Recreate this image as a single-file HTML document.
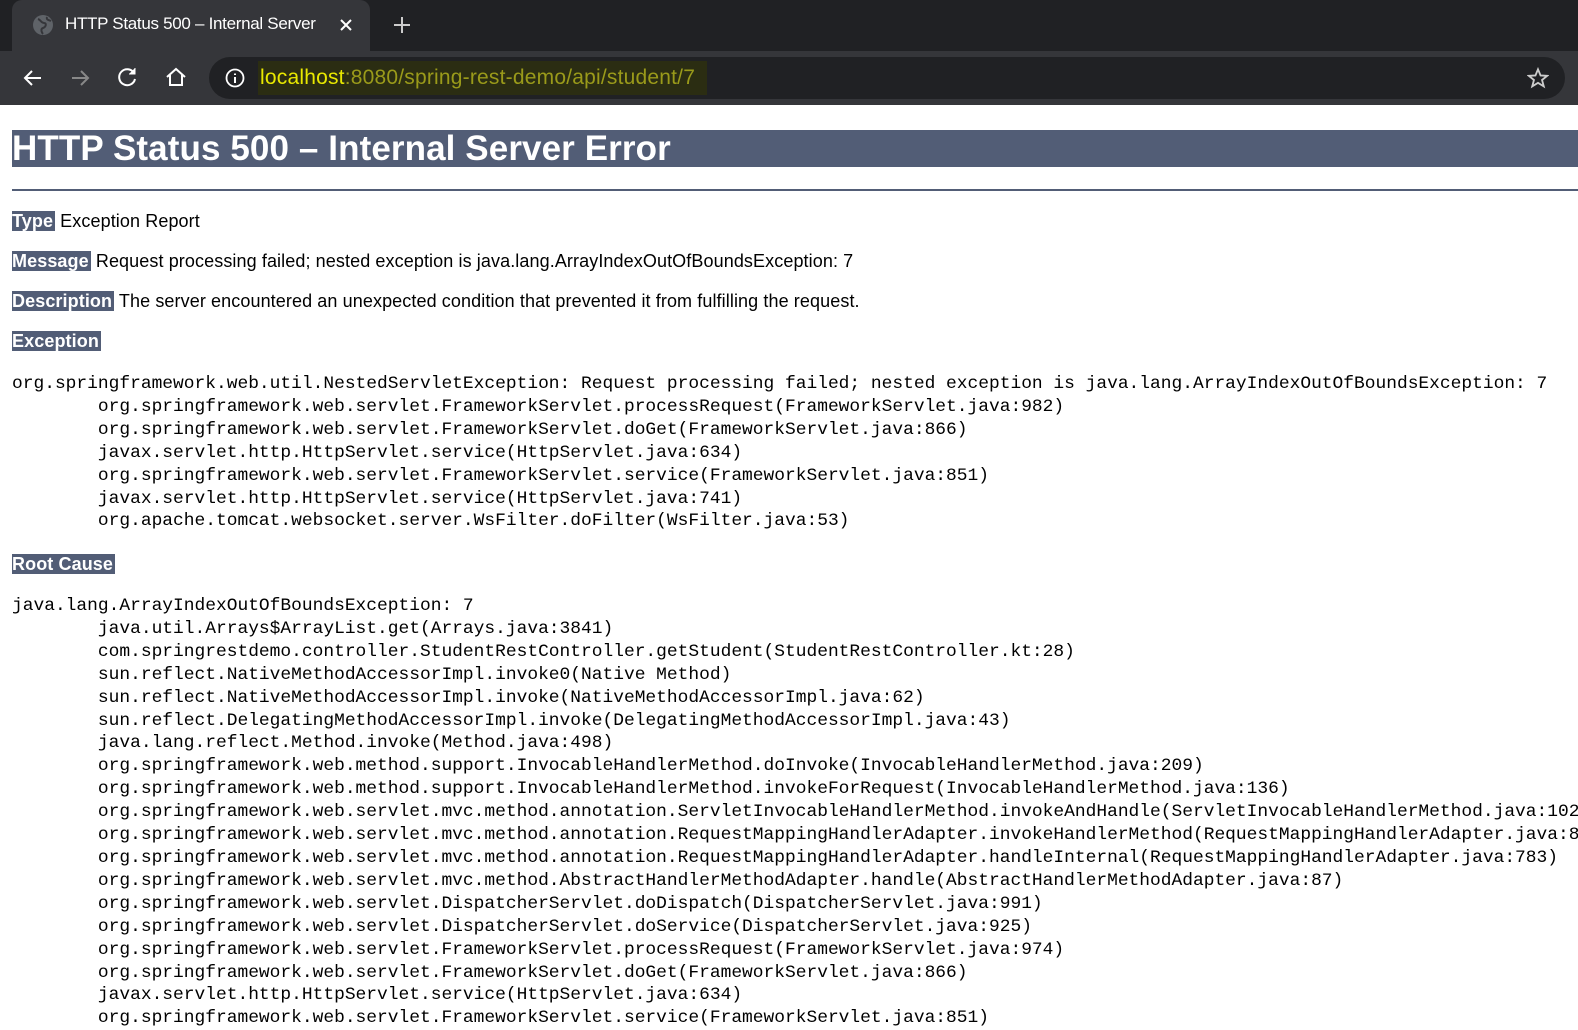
<!DOCTYPE html>
<html><head><meta charset="utf-8"><style>
body{margin:0;width:1578px;height:1018px;overflow:hidden;background:#fff;font-family:"Liberation Sans",sans-serif;}
.tabs{position:absolute;left:0;top:0;width:1578px;height:51px;background:#202124}
.tab{position:absolute;left:12px;top:0;width:358px;height:51px;background:#35363a;border-radius:10px 10px 0 0;color:#fff;font-size:17px}
.tab .t{position:absolute;left:53px;top:14px;letter-spacing:-0.3px;white-space:nowrap;width:260px;overflow:hidden}
.tool{position:absolute;left:0;top:51px;width:1578px;height:54px;background:#35363a}
.omni{position:absolute;left:209px;top:6px;width:1356px;height:42px;background:#202124;border-radius:21px}
.url{position:absolute;left:49px;top:4px;height:34px;padding:0 12px 0 2px;background:#2b2d12;font-size:21px;line-height:34px;color:#9a9a1a;letter-spacing:0.2px}
.url b{font-weight:normal;color:#e8e800}
.h1{position:absolute;left:12px;top:130px;width:1566px;height:37px;background:#525D76;color:#fff;font-weight:bold;font-size:35px;line-height:37px;letter-spacing:0.1px;white-space:nowrap;overflow:hidden}
.hr{position:absolute;left:12px;top:189px;width:1566px;height:2px;background:#525D76}
.row{position:absolute;left:12px;font-size:18px;color:#000;white-space:nowrap;letter-spacing:0.1px}
.row .l{background:#525D76;color:#fff;font-weight:bold;padding:0 2px 0 0}
pre{position:absolute;left:12px;margin:0;font-family:"Liberation Mono",monospace;font-size:17.9px;line-height:22.9px;color:#000}
</style></head><body>
<div class="tabs"><div class="tab">
<svg style="position:absolute;left:20px;top:14px" width="22" height="22" viewBox="0 0 22 22"><circle cx="11" cy="11" r="10" fill="#5f6368"/><path d="M6 5c3 1 3 4 6 4s2 4-1 5-1 5 0 6M15 3c-1 3 2 3 4 4" stroke="#35363a" stroke-width="2" fill="none"/></svg>
<div class="t">HTTP Status 500 – Internal Server</div>
<svg style="position:absolute;left:327px;top:18px" width="14" height="14"><path d="M2 2L12 12M12 2L2 12" stroke="#fff" stroke-width="2"/></svg>
</div>
<svg style="position:absolute;left:392px;top:15px" width="20" height="20"><path d="M10 2V18M2 10H18" stroke="#ccc" stroke-width="2"/></svg>
</div>
<div class="tool">
<svg style="position:absolute;left:22px;top:16px" width="22" height="22"><path d="M19 11H4M10 4L3 11L10 18" stroke="#fff" stroke-width="2" fill="none"/></svg>
<svg style="position:absolute;left:69px;top:16px" width="22" height="22"><path d="M3 11H18M12 4L19 11L12 18" stroke="#888" stroke-width="2" fill="none"/></svg>
<svg style="position:absolute;left:117px;top:15px" width="22" height="22"><path d="M17 7A8 8 0 1 0 18 13" stroke="#fff" stroke-width="2" fill="none"/><path d="M18 2V8H12" fill="#fff" stroke="#fff" stroke-width="1"/></svg>
<svg style="position:absolute;left:164px;top:14px" width="24" height="24"><path d="M3 12L12 4L21 12M6 10V20H18V10" stroke="#fff" stroke-width="2" fill="none"/></svg>
<div class="omni">
<svg style="position:absolute;left:16px;top:11px" width="20" height="20"><circle cx="10" cy="10" r="8.5" stroke="#fff" stroke-width="1.8" fill="none"/><path d="M10 9V15M10 5.5V7" stroke="#fff" stroke-width="2"/></svg>
<div class="url"><b>localhost</b>:8080/spring-rest-demo/api/student/7</div>
<svg style="position:absolute;left:1318px;top:10px" width="22" height="22" viewBox="0 0 24 24"><path d="M12 2.5L14.8 9.2L22 9.6L16.4 14.2L18.3 21.2L12 17.3L5.7 21.2L7.6 14.2L2 9.6L9.2 9.2Z" stroke="#ccc" stroke-width="2" fill="none"/></svg>
</div></div>
<div class="h1">HTTP Status 500 – Internal Server Error</div>
<div class="hr"></div>
<div class="row" style="top:211px"><span class="l">Type</span> Exception Report</div>
<div class="row" style="top:251px"><span class="l">Message</span> Request processing failed; nested exception is java.lang.ArrayIndexOutOfBoundsException: 7</div>
<div class="row" style="top:291px"><span class="l">Description</span> The server encountered an unexpected condition that prevented it from fulfilling the request.</div>
<div class="row" style="top:331px"><span class="l">Exception</span></div>
<pre style="top:373px">org.springframework.web.util.NestedServletException: Request processing failed; nested exception is java.lang.ArrayIndexOutOfBoundsException: 7
	org.springframework.web.servlet.FrameworkServlet.processRequest(FrameworkServlet.java:982)
	org.springframework.web.servlet.FrameworkServlet.doGet(FrameworkServlet.java:866)
	javax.servlet.http.HttpServlet.service(HttpServlet.java:634)
	org.springframework.web.servlet.FrameworkServlet.service(FrameworkServlet.java:851)
	javax.servlet.http.HttpServlet.service(HttpServlet.java:741)
	org.apache.tomcat.websocket.server.WsFilter.doFilter(WsFilter.java:53)
</pre>
<div class="row" style="top:554px"><span class="l">Root Cause</span></div>
<pre style="top:595px">java.lang.ArrayIndexOutOfBoundsException: 7
	java.util.Arrays$ArrayList.get(Arrays.java:3841)
	com.springrestdemo.controller.StudentRestController.getStudent(StudentRestController.kt:28)
	sun.reflect.NativeMethodAccessorImpl.invoke0(Native Method)
	sun.reflect.NativeMethodAccessorImpl.invoke(NativeMethodAccessorImpl.java:62)
	sun.reflect.DelegatingMethodAccessorImpl.invoke(DelegatingMethodAccessorImpl.java:43)
	java.lang.reflect.Method.invoke(Method.java:498)
	org.springframework.web.method.support.InvocableHandlerMethod.doInvoke(InvocableHandlerMethod.java:209)
	org.springframework.web.method.support.InvocableHandlerMethod.invokeForRequest(InvocableHandlerMethod.java:136)
	org.springframework.web.servlet.mvc.method.annotation.ServletInvocableHandlerMethod.invokeAndHandle(ServletInvocableHandlerMethod.java:102)
	org.springframework.web.servlet.mvc.method.annotation.RequestMappingHandlerAdapter.invokeHandlerMethod(RequestMappingHandlerAdapter.java:877)
	org.springframework.web.servlet.mvc.method.annotation.RequestMappingHandlerAdapter.handleInternal(RequestMappingHandlerAdapter.java:783)
	org.springframework.web.servlet.mvc.method.AbstractHandlerMethodAdapter.handle(AbstractHandlerMethodAdapter.java:87)
	org.springframework.web.servlet.DispatcherServlet.doDispatch(DispatcherServlet.java:991)
	org.springframework.web.servlet.DispatcherServlet.doService(DispatcherServlet.java:925)
	org.springframework.web.servlet.FrameworkServlet.processRequest(FrameworkServlet.java:974)
	org.springframework.web.servlet.FrameworkServlet.doGet(FrameworkServlet.java:866)
	javax.servlet.http.HttpServlet.service(HttpServlet.java:634)
	org.springframework.web.servlet.FrameworkServlet.service(FrameworkServlet.java:851)
</pre>
</body></html>
